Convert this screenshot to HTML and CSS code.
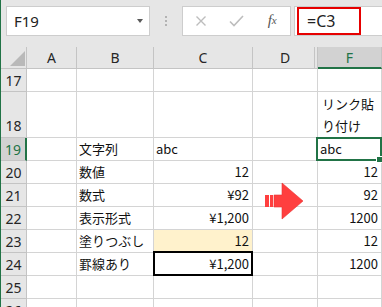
FILE: index.html
```html
<!DOCTYPE html>
<html>
<head>
  <meta charset="utf-8">
  <title>リンク貼り付け</title>
  <link rel="stylesheet" href="styles.css">
</head>
<body>
  <div class="app">
    <div class="toolbar">
      <div class="namebox">
        <span>F19</span>
        <span class="caret"></span>
      </div>
      <div class="grip"><i></i><i></i><i></i></div>
      <div class="fbtns">
        <span class="slot">
          <svg width="12" height="12" viewBox="0 0 12 12"><path d="M1.5 1.5 L10.5 10.5 M10.5 1.5 L1.5 10.5" stroke="#bdbdbd" stroke-width="1.4" fill="none"/></svg>
        </span>
        <span class="slot">
          <svg width="15" height="12" viewBox="0 0 15 12"><path d="M1 6.5 L5 10.5 L14 1" stroke="#bdbdbd" stroke-width="1.6" fill="none"/></svg>
        </span>
        <span class="slot fx"><i>f</i><sub>x</sub></span>
      </div>
      <div class="formula">
        <span class="hl">=C3</span>
      </div>
    </div>

    <div class="sheet">
      <div class="grid">
        <!-- header -->
        <div class="hd corner"><span class="tri"></span></div>
        <div class="hd col">A</div>
        <div class="hd col">B</div>
        <div class="hd col">C</div>
        <div class="hd col hidden-next">D</div>
        <div class="hd col on">F</div>

        <div class="hd row">17</div>
        <div class="c"></div><div class="c"></div><div class="c"></div><div class="c"></div><div class="c"></div>

        <div class="hd row tall">18</div>
        <div class="c"></div><div class="c"></div><div class="c"></div><div class="c"></div>
        <div class="c wrap">リンク貼り付け</div>

        <div class="hd row on">19</div>
        <div class="c"></div>
        <div class="c">文字列</div>
        <div class="c">abc</div>
        <div class="c"></div>
        <div class="c sel">abc</div>

        <div class="hd row">20</div>
        <div class="c"></div>
        <div class="c">数値</div>
        <div class="c num">12</div>
        <div class="c"></div>
        <div class="c num">12</div>

        <div class="hd row">21</div>
        <div class="c"></div>
        <div class="c">数式</div>
        <div class="c num">¥92</div>
        <div class="c"></div>
        <div class="c num">92</div>

        <div class="hd row">22</div>
        <div class="c"></div>
        <div class="c">表示形式</div>
        <div class="c num">¥1,200</div>
        <div class="c"></div>
        <div class="c num">1200</div>

        <div class="hd row">23</div>
        <div class="c"></div>
        <div class="c">塗りつぶし</div>
        <div class="c num fill">12</div>
        <div class="c"></div>
        <div class="c num">12</div>

        <div class="hd row">24</div>
        <div class="c"></div>
        <div class="c">罫線あり</div>
        <div class="c num boxed">¥1,200</div>
        <div class="c"></div>
        <div class="c num">1200</div>

        <div class="hd row">25</div>
        <div class="c"></div><div class="c"></div><div class="c"></div><div class="c"></div><div class="c"></div>

        <div class="hd row">26</div>
        <div class="c"></div><div class="c"></div><div class="c"></div><div class="c"></div><div class="c"></div>
      </div>

      <svg class="arrow" width="40" height="38" viewBox="0 0 40 38">
        <rect x="1" y="13" width="4" height="12" fill="#ff3f3f"/>
        <rect x="6" y="13" width="3" height="12" fill="#ff3f3f"/>
        <path d="M10 13 H18 V1 L39 19 L18 37 V25 H10 Z" fill="#ff3f3f" stroke="#e83232" stroke-width="0.6"/>
      </svg>
    </div>
  </div>
</body>
</html>
```

FILE: styles.css
```css
body {
    margin: 0;
    padding: 0;
    background-color: #fff;
    font-family: "Noto Sans", "Liberation Sans", sans-serif;
}
.app {
    width: 381px;
    height: 307px;
    border-left: 1px solid #217346;
    overflow: hidden;
}
.toolbar {
    height: 47px;
    box-sizing: border-box;
    padding: 6px 0 0 5px;
    display: flex;
    align-items: flex-start;
    background-color: #e6e6e6;
}
.namebox {
    width: 144px;
    height: 30px;
    box-sizing: border-box;
    border: 1px solid #cdcdcd;
    background-color: #fff;
    display: flex;
    align-items: center;
    justify-content: space-between;
    padding: 0 6px 0 7px;
    font-size: 15px;
    color: #222;
}
.caret {
    width: 0;
    height: 0;
    border-left: 3.5px solid transparent;
    border-right: 3.5px solid transparent;
    border-top: 4px solid #595959;
}
.grip {
    width: 32px;
    height: 30px;
    display: flex;
    flex-direction: column;
    align-items: center;
    justify-content: center;
    gap: 2px;
}
.grip i {
    width: 2px;
    height: 2px;
    background-color: #b3b3b3;
}
.fbtns {
    width: 109px;
    height: 30px;
    box-sizing: border-box;
    border: 1px solid #cdcdcd;
    background-color: #fff;
    display: flex;
}
.slot {
    width: 36px;
    display: flex;
    align-items: center;
    justify-content: center;
}
.fx {
    font-family: "Liberation Serif", serif;
    font-size: 15px;
    color: #555;
    padding-bottom: 2px;
}
.fx sub {
    font-style: italic;
    font-size: 11px;
    vertical-align: -1px;
}
.formula {
    flex: 1;
    height: 30px;
    margin-left: 3px;
    box-sizing: border-box;
    border: 1px solid #cdcdcd;
    border-right: none;
    background-color: #fff;
    padding: 0 0 0 2px;
}
.hl {
    display: inline-block;
    width: 64px;
    height: 28px;
    box-sizing: border-box;
    border: 2px solid #e60000;
    padding-left: 8px;
    font-size: 16px;
    line-height: 24px;
    color: #222;
}

.sheet {
    position: relative;
}
.grid {
    display: grid;
    grid-template-columns: 26px 50px 77px 99px 65px 1fr;
    grid-template-rows: 22px 23px 46px repeat(8, 23px);
}
.hd {
    box-sizing: border-box;
    background-color: #e6e6e6;
    border-right: 1px solid #c4c4c4;
    border-bottom: 1px solid #c4c4c4;
    display: flex;
    align-items: center;
    justify-content: center;
    font-size: 14px;
    color: #262626;
}
.hd.corner {
    align-items: flex-end;
    justify-content: flex-end;
    padding: 0 1px 2px 0;
}
.tri {
    width: 15px;
    height: 15px;
    background-color: #b9b9b9;
    clip-path: polygon(100% 0, 100% 100%, 0 100%);
}
.hd.hidden-next {
    background: linear-gradient(to left, transparent 2px, #c4c4c4 2px, #c4c4c4 3px, transparent 3px), #e6e6e6;
}
.hd.col.on {
    background-color: #d2d2d2;
    border-bottom: 2px solid #217346;
    color: #217346;
}
.hd.row {
    padding-top: 1px;
}
.hd.row.tall {
    align-items: flex-end;
    padding-bottom: 2px;
}
.hd.row.on {
    background-color: #d2d2d2;
    border-right: 2px solid #217346;
    color: #217346;
}
.c {
    position: relative;
    box-sizing: border-box;
    border-right: 1px solid #d4d4d4;
    border-bottom: 1px solid #d4d4d4;
    padding: 0 3px 0 2px;
    font-family: "Noto Sans CJK JP", sans-serif;
    font-size: 13px;
    line-height: 22px;
    color: #111;
    white-space: nowrap;
}
.c.num {
    text-align: right;
}
.c.wrap {
    white-space: normal;
    display: flex;
    align-items: flex-end;
    padding: 0 6px 0 4px;
    line-height: 22px;
}
.c.fill {
    background-color: #fff2cc;
}
.c.boxed::after {
    content: "";
    position: absolute;
    top: -2px;
    left: -1px;
    right: -1px;
    bottom: -1px;
    border: 2px solid #000;
}
.c.sel::after {
    content: "";
    position: absolute;
    top: -1px;
    left: -2px;
    right: -1px;
    bottom: -1px;
    border: 2px solid #217346;
}
.c.sel::before {
    content: "";
    position: absolute;
    right: -2px;
    bottom: -3px;
    width: 5px;
    height: 5px;
    background-color: #217346;
    border: 1px solid #fff;
    z-index: 1;
}
.arrow {
    position: absolute;
    left: 263px;
    top: 135px;
}
```
